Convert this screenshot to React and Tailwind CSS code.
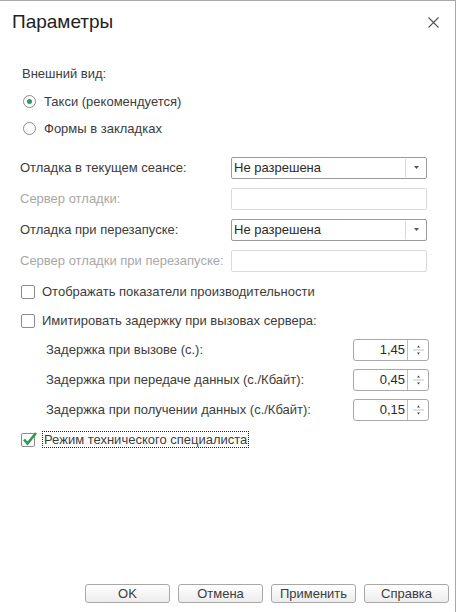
import React from 'react'

const font = "font-['Liberation_Sans',Arial,sans-serif]"

const Radio = ({ checked, label }) => (
  <div className="h-[27px] flex items-center pl-[3px]">
    <span className="w-[13px] h-[13px] rounded-full border border-[#8c8c8c] bg-white flex items-center justify-center">
      {checked && <span className="w-[5px] h-[5px] rounded-full bg-[#2e9a63]" />}
    </span>
    <span className="ml-[8px] text-[13px] text-[#3c3c3c]">{label}</span>
  </div>
)

const Combo = ({ value }) => (
  <div className="w-[196px] h-[22px] border border-[#9a9a9a] rounded-[2px] bg-white flex items-center">
    <span className="flex-1 pl-[2px] text-[13px] text-[#2a2a2a]">{value}</span>
    <span className="w-[21px] h-[18px] border-l border-[#d8d8d8] flex items-center justify-center">
      <svg width="5" height="3" viewBox="0 0 5 3"><path d="M0 0h5L2.5 3z" fill="#555" /></svg>
    </span>
  </div>
)

const Field = () => (
  <div className="w-[196px] h-[22px] border border-[#dadada] rounded-[2px] bg-white" />
)

const Row = ({ label, disabled, children }) => (
  <div className="h-[31px] flex items-center">
    <span className={`w-[211px] text-[13px] whitespace-nowrap ${disabled ? 'text-[#a8a8a8]' : 'text-[#3c3c3c]'}`}>{label}</span>
    {children}
  </div>
)

const Checkbox = ({ checked, label, focused }) => (
  <div className="h-[29px] flex items-center pl-[1px]">
    <span className="relative w-[14px] h-[14px] border border-[#8c8c8c] rounded-[2px] bg-white">
      {checked && (
        <svg className="absolute left-[0px] top-[-3px]" width="16" height="16" viewBox="0 0 16 16">
          <path d="M2 8.5l3.5 4L14 2" fill="none" stroke="#2b9a4c" strokeWidth="2.6" />
        </svg>
      )}
    </span>
    <span className={`ml-[7px] text-[13px] text-[#3c3c3c] ${focused ? 'border border-dotted border-[#222] px-[1px] ml-[6px] leading-[15px]' : ''}`}>{label}</span>
  </div>
)

const Spin = ({ label, value }) => (
  <div className="h-[30px] flex items-center pl-[26px]">
    <span className="flex-1 text-[13px] text-[#3c3c3c]">{label}</span>
    <div className="w-[76px] h-[22px] border border-[#a8a8a8] rounded-[3px] bg-white flex items-center">
      <span className="flex-1 text-right pr-[2px] text-[13px] text-[#2a2a2a]">{value}</span>
      <span className="w-[21px] h-[20px] border-l border-[#bdbdbd] flex items-center justify-center">
        <svg width="11" height="16" viewBox="0 0 11 16">
          <path d="M4 5.5h3L5.5 3.5z" fill="#444" />
          <path d="M0 8h11" stroke="#c4c4c4" strokeWidth="1" />
          <path d="M4 10.5h3L5.5 12.5z" fill="#444" />
        </svg>
      </span>
    </div>
  </div>
)

const Button = ({ children }) => (
  <button className="w-[85px] h-[19px] border border-[#a8a8a8] rounded-[3px] bg-gradient-to-b from-white to-[#ececec] text-[13px] text-[#3c3c3c] leading-none flex items-center justify-center">
    {children}
  </button>
)

export default function App() {
  return (
    <div className={`w-[459px] h-[612px] bg-white ${font}`}>
      <div className="w-[456px] h-[612px] border-t border-r border-[#a8a8a8] flex flex-col">
        <div className="h-[43px] flex items-center justify-between pl-[12px] pr-[16px]">
          <span className="text-[19px] text-[#222]">Параметры</span>
          <svg width="11" height="11" viewBox="0 0 11 11">
            <path d="M0.5 0.5l10 10M10.5 0.5l-10 10" stroke="#555" strokeWidth="1.1" />
          </svg>
        </div>
        <div className="pl-[20px] pr-[28px] pt-[16px]">
          <div className="h-[28px] flex items-center pl-[2px] text-[13px] text-[#3c3c3c]">Внешний вид:</div>
          <Radio checked label="Такси (рекомендуется)" />
          <Radio label="Формы в закладках" />
          <div className="mt-[10px]">
            <Row label="Отладка в текущем сеансе:"><Combo value="Не разрешена" /></Row>
            <Row label="Сервер отладки:" disabled><Field /></Row>
            <Row label="Отладка при перезапуске:"><Combo value="Не разрешена" /></Row>
            <Row label="Сервер отладки при перезапуске:" disabled><Field /></Row>
          </div>
          <div className="mt-[1px]">
            <Checkbox label="Отображать показатели производительности" />
            <Checkbox label="Имитировать задержку при вызовах сервера:" />
          </div>
          <div className="-mr-[2px]">
            <Spin label="Задержка при вызове (с.):" value="1,45" />
            <Spin label="Задержка при передаче данных (с./Кбайт):" value="0,45" />
            <Spin label="Задержка при получении данных (с./Кбайт):" value="0,15" />
          </div>
          <Checkbox checked focused label="Режим технического специалиста" />
        </div>
        <div className="mt-auto flex justify-end gap-[8px] pr-[6px] pb-[9px]">
          <Button>OK</Button>
          <Button>Отмена</Button>
          <Button>Применить</Button>
          <Button>Справка</Button>
        </div>
      </div>
    </div>
  )
}
